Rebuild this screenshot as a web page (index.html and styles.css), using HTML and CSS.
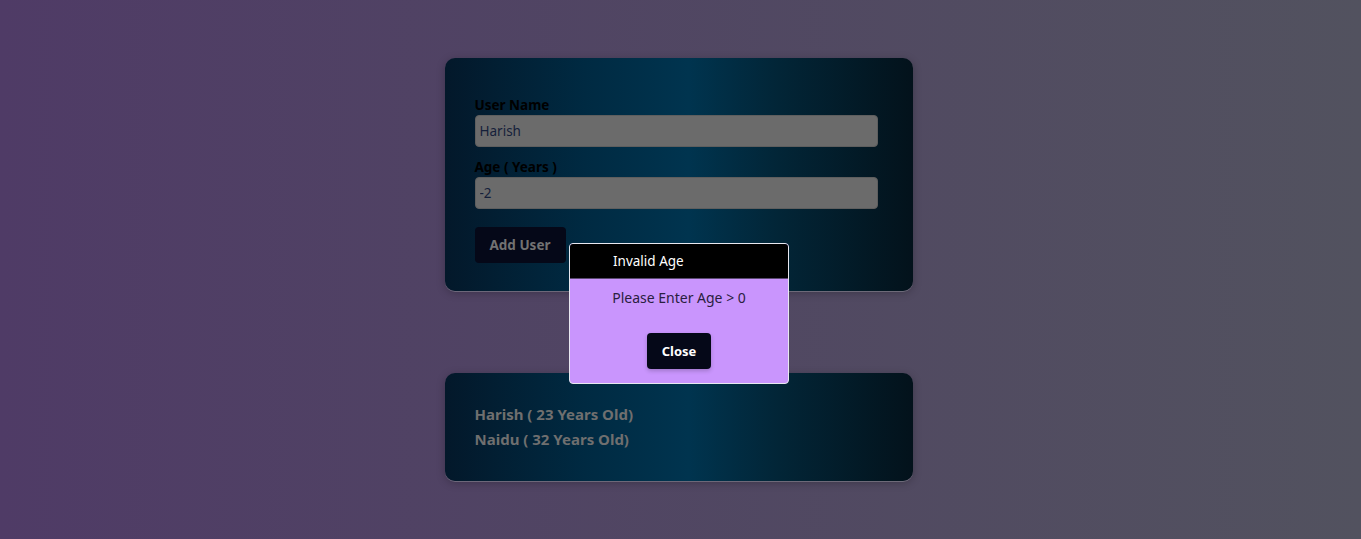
FILE: index.html
```html
<!DOCTYPE html>
<html>
<head>
<meta charset="utf-8">
<link rel="stylesheet" href="styles.css">
</head>
<body>
<div class="page">
  <div class="card form-card">
    <form class="form">
      <label class="label">User Name</label>
      <input class="input" type="text" value="Harish">
      <label class="label">Age ( Years )</label>
      <input class="input" type="text" value="-2">
      <button type="button" class="btn add-btn">Add User</button>
    </form>
  </div>
  <div class="card list-card">
    <ul class="users">
      <li>Harish ( 23 Years Old)</li>
      <li>Naidu ( 32 Years Old)</li>
    </ul>
  </div>
</div>
<div class="modal">
  <div class="modal-header">Invalid Age</div>
  <div class="modal-body">
    <p class="modal-text">Please Enter Age &gt; 0</p>
    <button type="button" class="btn close-btn">Close</button>
  </div>
</div>
</body>
</html>
```
FILE: styles.css
```css
* { box-sizing: border-box; }
html, body { margin: 0; height: 100%; }
body {
  background: linear-gradient(to right, #4f3b66, #52525f);
  font-family: "Noto Sans", "Open Sans", sans-serif;
  overflow: hidden;
}
.page {
  display: flex;
  flex-direction: column;
  align-items: center;
  padding-top: 58px;
  padding-right: 4px;
  gap: 82px;
}
.card {
  width: 468px;
  border-radius: 10px;
  background: linear-gradient(to right, #03182a 0%, #002a42 30%, #00344f 52%, #022638 70%, #03121b 100%);
  box-shadow: 0 1px 0 rgba(150,150,160,0.5), 0 2px 8px rgba(0,0,0,0.25);
}
.form-card { padding: 38px 34px 28px 30px; height: 233px; }
.form { display: flex; flex-direction: column; }
.label {
  font-weight: 700;
  font-size: 13.5px;
  color: #000;
  line-height: 19px;
  margin-bottom: 0;
}
.input {
  width: 403px;
  height: 32px;
  background: #6b6b6b;
  border: 1px solid #5e5e5e;
  border-radius: 4px;
  font-family: inherit;
  font-size: 13.5px;
  color: #15203a;
  padding: 0 4px;
  margin-bottom: 11px;
  outline: none;
}
.btn {
  font-family: inherit;
  font-weight: 700;
  border: none;
  border-radius: 4px;
  background: #050818;
  cursor: pointer;
}
.add-btn {
  align-self: flex-start;
  margin-top: 7px;
  width: 91px;
  height: 36px;
  font-size: 13.5px;
  color: #727272;
}
.list-card { padding: 29px 30px; height: 108px; }
.users { list-style: none; margin: 0; padding: 0; }
.users li {
  font-weight: 700;
  font-size: 15px;
  color: #6f6f6f;
  line-height: 25px;
}
.modal {
  position: absolute;
  left: 569px;
  top: 243px;
  width: 220px;
  height: 141px;
  border: 1px solid #e8e8f0;
  border-radius: 4px;
  overflow: hidden;
  background: #c995fd;
  display: flex;
  flex-direction: column;
}
.modal-header {
  background: #000;
  color: #fff;
  height: 35px;
  font-size: 13.5px;
  line-height: 35px;
  padding-left: 43px;
  border-bottom: 1px solid #5a4a70;
}
.modal-body {
  display: flex;
  flex-direction: column;
  align-items: center;
}
.modal-text {
  margin: 9px 0 0;
  font-size: 14px;
  line-height: 20px;
  color: #2a2040;
}
.close-btn {
  margin-top: 25px;
  width: 64px;
  height: 36px;
  color: #fff;
  font-size: 13px;
  box-shadow: 0 2px 4px rgba(0,0,0,0.2);
}
```
